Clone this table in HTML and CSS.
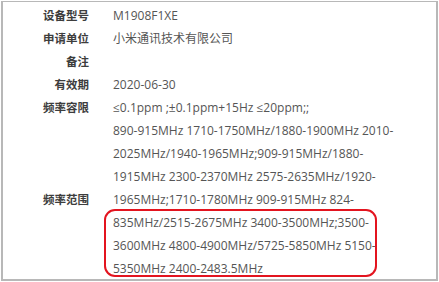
FILE: index.html
```html
<!DOCTYPE html>
<html lang="zh">
<head>
<meta charset="utf-8">
<link rel="stylesheet" href="styles.css">
</head>
<body>
<div class="frame">
  <div class="info">
    <div class="label">设备型号</div><div class="value">M1908F1XE</div>
    <div class="label">申请单位</div><div class="value">小米通讯技术有限公司</div>
    <div class="label">备注</div><div class="value"></div>
    <div class="label">有效期</div><div class="value">2020-06-30</div>
    <div class="label">频率容限</div><div class="value">≤0.1ppm ;±0.1ppm+15Hz ≤20ppm;;</div>
    <div class="label mid">频率范围</div><div class="value">890-915MHz 1710-1750MHz/1880-1900MHz 2010-2025MHz/1940-1965MHz;909-915MHz/1880-1915MHz 2300-2370MHz 2575-2635MHz/1920-1965MHz;1710-1780MHz 909-915MHz 824-835MHz/2515-2675MHz 3400-3500MHz;3500-3600MHz 4800-4900MHz/5725-5850MHz 5150-5350MHz 2400-2483.5MHz</div>
  </div>
  <div class="highlight"></div>
</div>
</body>
</html>
```
FILE: styles.css
```css
html, body {
  margin: 0;
  padding: 0;
  background: #ffffff;
}
.frame {
  position: relative;
  margin: 1px 0 0 1px;
  width: 433px;
  height: 277px;
  border: 2px solid #b8b8b8;
  border-top-width: 1px;
  background: #ffffff;
  overflow: hidden;
}
.info {
  display: grid;
  grid-template-columns: 86px 292px;
  column-gap: 24px;
  padding-top: 2px;
  font-family: "Open Sans", "Noto Sans CJK SC", sans-serif;
  font-size: 12px;
  line-height: 23px;
}
.label {
  text-align: right;
  font-weight: bold;
  color: #3d3d3d;
  font-size: 11.5px;
  min-height: 23px;
}
.label.mid {
  align-self: center;
}
.value {
  color: #555555;
  min-height: 23px;
  word-break: normal;
}
.highlight {
  position: absolute;
  left: 101px;
  top: 207px;
  width: 269px;
  height: 64px;
  border: 2px solid #e3141f;
  border-radius: 11px;
}
```
